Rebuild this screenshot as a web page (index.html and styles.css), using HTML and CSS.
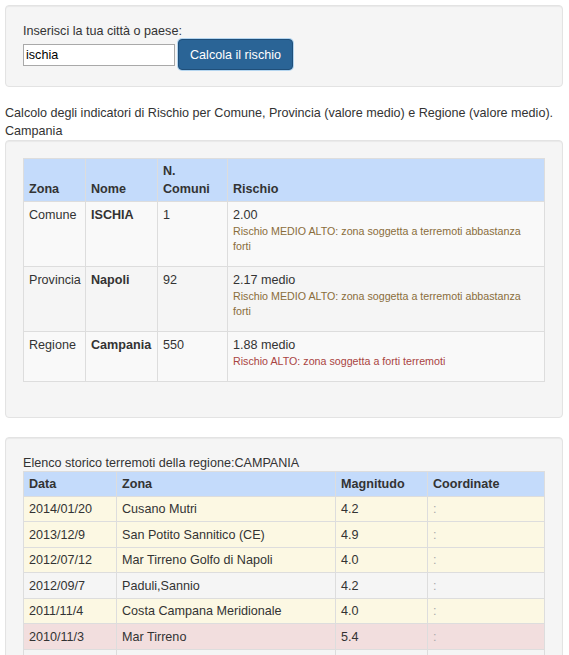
FILE: index.html
```html
<!DOCTYPE html>
<html lang="it">
<head>
  <meta charset="UTF-8">
  <meta name="viewport" content="width=device-width, initial-scale=1.0">
  <title>Rischio sismico</title>
  <link rel="stylesheet" href="styles.css">
</head>
<body>
  <div class="well search-well">
    <label class="search-label" for="citta">Inserisci la tua città o paese:</label>
    <div class="search-row">
      <input type="text" id="citta" class="search-input" value="ischia">
      <button class="btn-primary">Calcola il rischio</button>
    </div>
  </div>

  <p class="intro">Calcolo degli indicatori di Rischio per Comune, Provincia (valore medio) e Regione (valore medio). Campania</p>

  <div class="well">
    <table class="risk-table">
      <thead>
        <tr>
          <th class="col-zona">Zona</th>
          <th class="col-nome">Nome</th>
          <th class="col-comuni">N. Comuni</th>
          <th>Rischio</th>
        </tr>
      </thead>
      <tbody>
        <tr>
          <td>Comune</td>
          <td><b>ISCHIA</b></td>
          <td>1</td>
          <td>2.00<p class="risk-note text-warning">Rischio MEDIO ALTO: zona soggetta a terremoti abbastanza forti</p></td>
        </tr>
        <tr>
          <td>Provincia</td>
          <td><b>Napoli</b></td>
          <td>92</td>
          <td>2.17 medio<p class="risk-note text-warning">Rischio MEDIO ALTO: zona soggetta a terremoti abbastanza forti</p></td>
        </tr>
        <tr>
          <td>Regione</td>
          <td><b>Campania</b></td>
          <td>550</td>
          <td>1.88 medio<p class="risk-note text-danger">Rischio ALTO: zona soggetta a forti terremoti</p></td>
        </tr>
      </tbody>
    </table>
  </div>

  <div class="well">
    <div class="list-title">Elenco storico terremoti della regione:CAMPANIA</div>
    <table class="quake-table">
      <thead>
        <tr>
          <th class="col-data">Data</th>
          <th class="col-zona2">Zona</th>
          <th class="col-mag">Magnitudo</th>
          <th>Coordinate</th>
        </tr>
      </thead>
      <tbody>
        <tr class="warning"><td>2014/01/20</td><td>Cusano Mutri</td><td>4.2</td><td class="coord">:</td></tr>
        <tr class="warning"><td>2013/12/9</td><td>San Potito Sannitico (CE)</td><td>4.9</td><td class="coord">:</td></tr>
        <tr class="warning"><td>2012/07/12</td><td>Mar Tirreno Golfo di Napoli</td><td>4.0</td><td class="coord">:</td></tr>
        <tr><td>2012/09/7</td><td>Paduli,Sannio</td><td>4.2</td><td class="coord">:</td></tr>
        <tr class="warning"><td>2011/11/4</td><td>Costa Campana Meridionale</td><td>4.0</td><td class="coord">:</td></tr>
        <tr class="danger"><td>2010/11/3</td><td>Mar Tirreno</td><td>5.4</td><td class="coord">:</td></tr>
        <tr><td>2009/05/28</td><td>Golfo di Policastro</td><td>3.9</td><td class="coord">:</td></tr>
      </tbody>
    </table>
  </div>
</body>
</html>
```

FILE: styles.css
```css
body {
  font-family: "Liberation Sans", Arial, sans-serif;
  font-size: 12.6px;
  line-height: 18px;
  color: #333;
  margin: 0;
  padding: 5px 6px 0 5px;
}
.well {
  background-color: #f5f5f5;
  border: 1px solid #e3e3e3;
  border-radius: 4px;
  box-shadow: inset 0 1px 1px rgba(0, 0, 0, 0.05);
  padding: 17px 17px 17px;
  margin-bottom: 19px;
}
.search-well {
  padding-bottom: 16px;
  margin-bottom: 17px;
}
.search-label {
  display: block;
  line-height: 16px;
}
.search-row {
  display: flex;
  align-items: center;
  gap: 3px;
}
.search-input {
  width: 152px;
  height: 22px;
  box-sizing: border-box;
  border: 1px solid #a9a9a9;
  padding: 1px 2px;
  font-family: inherit;
  font-size: 12.6px;
  color: #000;
  background: #fff;
}
.btn-primary {
  height: 31px;
  padding: 0 11px;
  font-family: inherit;
  font-size: 12.6px;
  color: #fff;
  background-color: #2a6496;
  border: 1px solid #1f4f7a;
  border-radius: 4px;
  box-shadow: 0 0 0 1px rgba(102, 175, 233, 0.45);
  cursor: pointer;
}
.intro {
  margin: 0;
  line-height: 18px;
}
table {
  width: 100%;
  border-collapse: collapse;
  table-layout: fixed;
  border: 1px solid #ddd;
}
th, td {
  box-sizing: border-box;
  border: 1px solid #ddd;
  text-align: left;
}
th {
  background-color: #c4dbfb;
  font-weight: bold;
  vertical-align: bottom;
}
.risk-table {
  margin-bottom: 18px;
}
.risk-table th {
  padding: 3px 5px 3px;
}
.risk-table td {
  padding: 3.5px 5px 3px;
  vertical-align: top;
}
.risk-table tbody tr:nth-child(odd) td {
  background-color: #f9f9f9;
}
.col-zona { width: 62px; }
.col-nome { width: 72px; }
.col-comuni { width: 70px; }
.risk-note {
  font-size: 10.7px;
  line-height: 15.3px;
  margin: 0 0 9px;
}
.text-warning { color: #8a6d3b; }
.text-danger { color: #a94442; }
.list-title {
  line-height: 16px;
}
.quake-table {
  margin-bottom: 18px;
}
.quake-table th {
  padding: 3px 5px;
}
.quake-table td {
  padding: 3.25px 5px;
}
.col-data { width: 93px; }
.col-zona2 { width: 219px; }
.col-mag { width: 92px; }
.quake-table tr.warning td { background-color: #fcf8e3; }
.quake-table tr.danger td { background-color: #f2dede; }
.quake-table td.coord { color: #aaa; }
```
